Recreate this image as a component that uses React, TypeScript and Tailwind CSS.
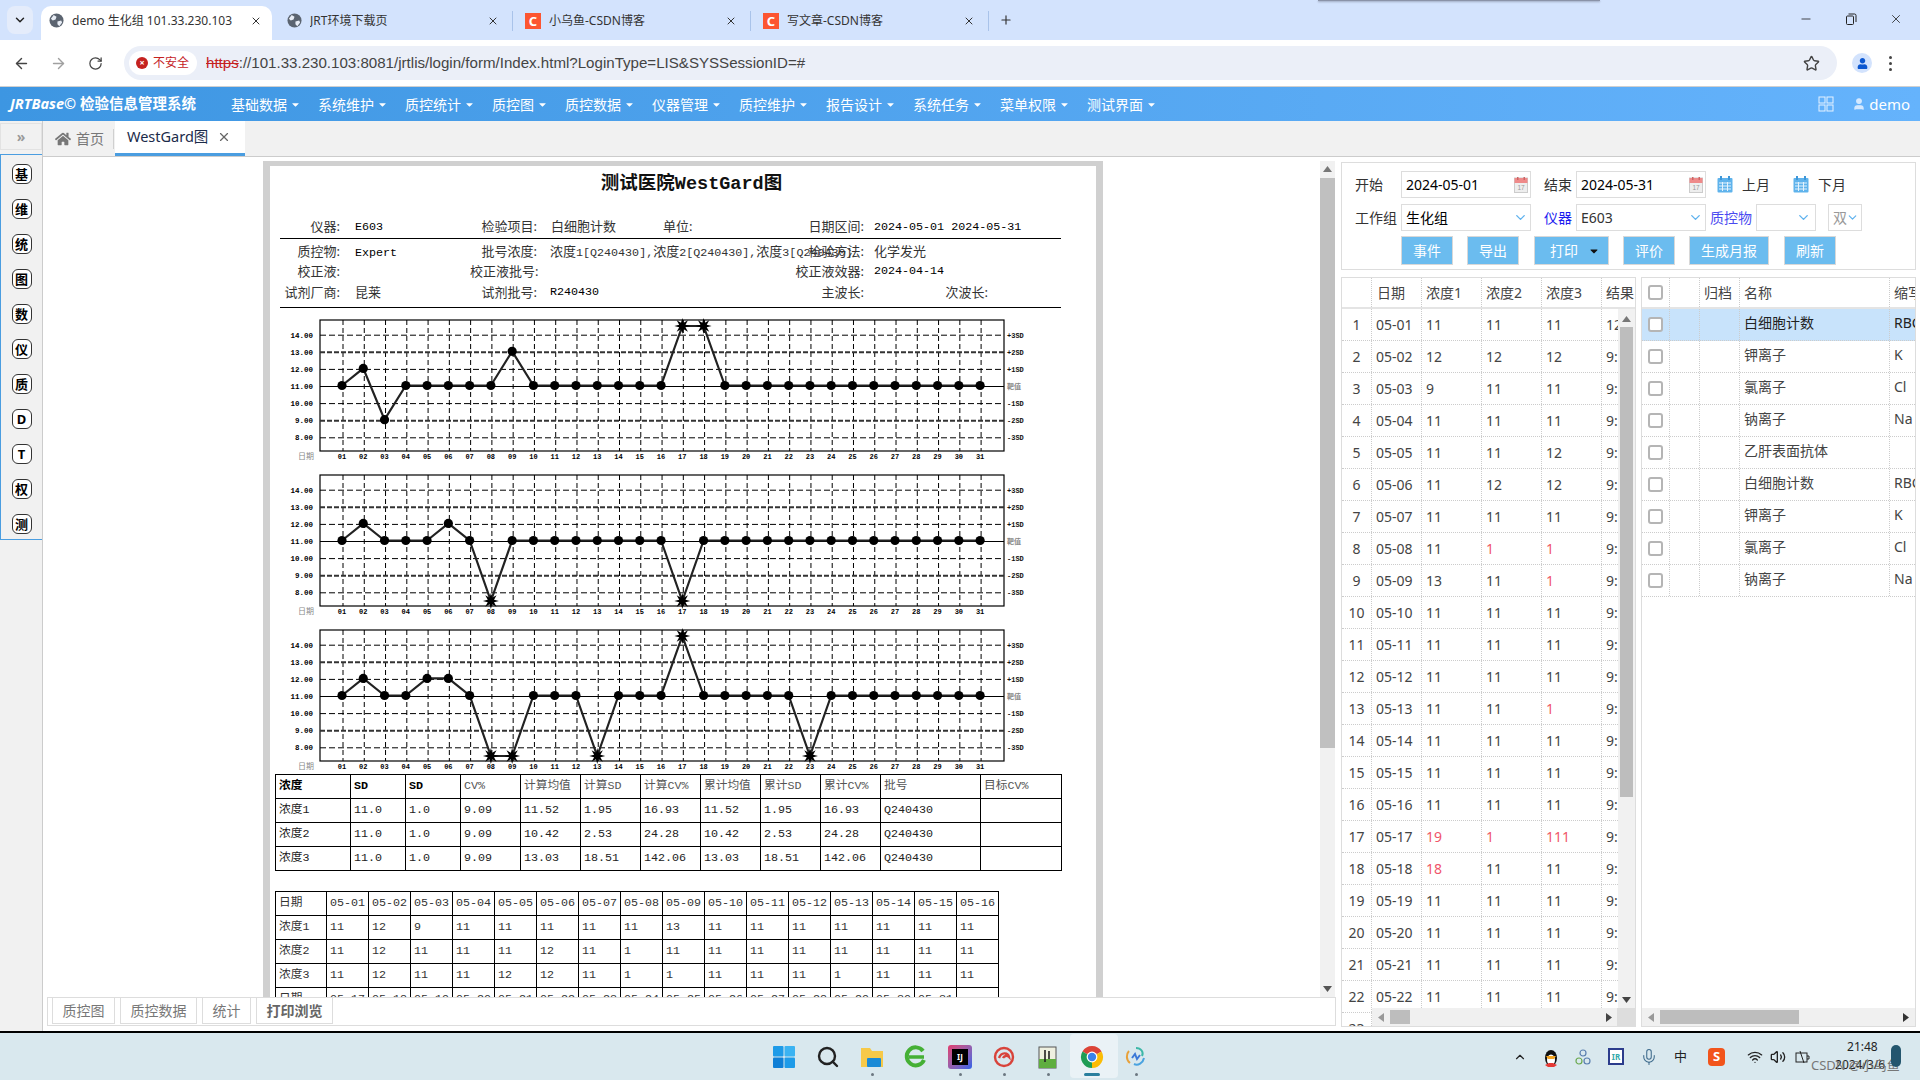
import { ArrowLeft, ArrowRight, ChevronDown, Minus, Plus, RotateCw, Search, Star, User, X, Mic, Volume2, Wifi, ChevronUp } from "lucide-react";
import { FaHome, FaUser, FaCaretDown } from "react-icons/fa";

const mono = "font-['Liberation_Mono','Noto_Sans_CJK_SC',monospace]";

const chromeTabs = [
  { title: "demo 生化组 101.33.230.103", icon: "globe", active: true },
  { title: "JRT环境下载页", icon: "globe", active: false },
  { title: "小乌鱼-CSDN博客", icon: "csdn", active: false },
  { title: "写文章-CSDN博客", icon: "csdn", active: false },
];

const menus = ["基础数据", "系统维护", "质控统计", "质控图", "质控数据", "仪器管理", "质控维护", "报告设计", "系统任务", "菜单权限", "测试界面"];
const sideIcons = ["基", "维", "统", "图", "数", "仪", "质", "D", "T", "权", "测"];
// 0 = not running, 1 = running dot, 2 = focused bar
const taskState = [0, 0, 1, 0, 1, 1, 1, 2, 1];

const base = Array.from({ length: 31 }, () => 11);
function series(over: Record<number, number>) {
  return base.map((v, i) => over[i + 1] ?? v);
}
const chart1 = series({ 2: 12, 3: 9, 9: 13, 17: 19, 18: 18 });
const chart2 = series({ 2: 12, 6: 12, 8: 1, 17: 1 });
const chart3 = series({ 2: 12, 5: 12, 6: 12, 8: 1, 9: 1, 13: 1, 17: 111, 23: 1 });

const yOf = (v: number) => 78.5 - (v - 11) * 17.1;
const leftLabels = [14, 13, 12, 11, 10, 9, 8];
const rightLabels = ["+3SD", "+2SD", "+1SD", "靶值", "-1SD", "-2SD", "-3SD"];

function StarMark({ x, y }: { x: number; y: number }) {
  const pts = Array.from({ length: 16 }, (_, i) => {
    const r = i % 2 === 0 ? 8 : 3.4;
    const a = (i * Math.PI) / 8 - Math.PI / 2;
    return `${x + r * Math.cos(a)},${y + r * Math.sin(a)}`;
  }).join(" ");
  return <polygon points={pts} fill="#000" />;
}

function Chart({ values }: { values: number[] }) {
  const xs = values.map((_, i) => 62 + i * 21.27);
  const ys = values.map((v) => (v > 14.5 ? 18 : v < 7.5 ? 138 : yOf(v) - 1));
  return (
    <svg width="781" height="155" className="block shrink-0">
      <rect x="40" y="12" width="684" height="131" fill="none" stroke="#000" strokeWidth="1.2" />
      {xs.map((x) => (
        <line key={x} x1={x + 1} x2={x + 1} y1="12" y2="143" stroke="#000" strokeDasharray="5 3" />
      ))}
      {[14, 12, 10, 8].map((v) => (
        <line key={v} x1="40" x2="724" y1={yOf(v)} y2={yOf(v)} stroke="#000" strokeDasharray="6 3" />
      ))}
      {[13, 9].map((v) => (
        <line key={v} x1="40" x2="724" y1={yOf(v)} y2={yOf(v)} stroke="#333" strokeWidth="2" strokeDasharray="5 2" />
      ))}
      <line x1="40" x2="724" y1={yOf(11)} y2={yOf(11)} stroke="#000" strokeWidth="1.2" />
      <polyline points={xs.map((x, i) => `${x},${ys[i]}`).join(" ")} fill="none" stroke="#222" strokeWidth="2.2" />
      {xs.map((x, i) =>
        values[i] > 14.5 || values[i] < 7.5 ? (
          <StarMark key={x} x={x} y={ys[i]} />
        ) : (
          <circle key={x} cx={x} cy={ys[i]} r="4.6" fill="#000" />
        ),
      )}
      {leftLabels.map((v) => (
        <text key={v} x="33" y={yOf(v) + 2.5} textAnchor="end" fontSize="7.5" fontWeight="700" fontFamily="Liberation Mono">
          {v}.00
        </text>
      ))}
      {rightLabels.map((l, i) => (
        <text key={l} x="727" y={yOf(14 - i) + 2.5} fontSize="7" fontWeight="700" fill={i === 3 ? "#888" : "#111"} fontFamily="Liberation Mono, Noto Sans CJK SC">
          {l}
        </text>
      ))}
      <text x="18" y="151" fontSize="8" fill="#888" fontFamily="Noto Sans CJK SC">日期</text>
      {xs.map((x, i) => (
        <text key={x} x={x} y="151" textAnchor="middle" fontSize="7" fontWeight="700" fontFamily="Liberation Mono">
          {String(i + 1).padStart(2, "0")}
        </text>
      ))}
    </svg>
  );
}

const statHead = ["浓度", "SD", "SD", "CV%", "计算均值", "计算SD", "计算CV%", "累计均值", "累计SD", "累计CV%", "批号", "目标CV%"];
const statRows = [
  ["浓度1", "11.0", "1.0", "9.09", "11.52", "1.95", "16.93", "11.52", "1.95", "16.93", "Q240430", ""],
  ["浓度2", "11.0", "1.0", "9.09", "10.42", "2.53", "24.28", "10.42", "2.53", "24.28", "Q240430", ""],
  ["浓度3", "11.0", "1.0", "9.09", "13.03", "18.51", "142.06", "13.03", "18.51", "142.06", "Q240430", ""],
];
const dayHead = ["日期", ...Array.from({ length: 16 }, (_, i) => `05-${String(i + 1).padStart(2, "0")}`)];
const dayRows = [
  ["浓度1", "11", "12", "9", "11", "11", "11", "11", "11", "13", "11", "11", "11", "11", "11", "11", "11"],
  ["浓度2", "11", "12", "11", "11", "11", "12", "11", "1", "11", "11", "11", "11", "11", "11", "11", "11"],
  ["浓度3", "11", "12", "11", "11", "12", "12", "11", "1", "1", "11", "11", "11", "1", "11", "11", "11"],
  ["日期", "05-17", "05-18", "05-19", "05-20", "05-21", "05-22", "05-23", "05-24", "05-25", "05-26", "05-27", "05-28", "05-29", "05-30", "05-31", ""],
];

type Cell = string | { v: string; red: true };
const r = (v: string): Cell => ({ v, red: true });
const qcRows: Cell[][] = [
  ["11", "11", "11", "12"],
  ["12", "12", "12", "9"],
  ["9", "11", "11", "9"],
  ["11", "11", "11", "9"],
  ["11", "11", "12", "9"],
  ["11", "12", "12", "9"],
  ["11", "11", "11", "9"],
  ["11", r("1"), r("1"), "9"],
  ["13", "11", r("1"), "9"],
  ["11", "11", "11", "9"],
  ["11", "11", "11", "9"],
  ["11", "11", "11", "9"],
  ["11", "11", r("1"), "9"],
  ["11", "11", "11", "9"],
  ["11", "11", "11", "9"],
  ["11", "11", "11", "9"],
  [r("19"), r("1"), r("111"), "9"],
  [r("18"), "11", "11", "9"],
  ["11", "11", "11", "9"],
  ["11", "11", "11", "9"],
  ["11", "11", "11", "9"],
  ["11", "11", "11", "9"],
  ["11", "11", "11", "9"],
];
const items = [
  ["白细胞计数", "RBC"],
  ["钾离子", "K"],
  ["氯离子", "Cl"],
  ["钠离子", "Na"],
  ["乙肝表面抗体", ""],
  ["白细胞计数", "RBC"],
  ["钾离子", "K"],
  ["氯离子", "Cl"],
  ["钠离子", "Na"],
];

function GlobeIcon() {
  return (
    <svg width="15" height="15" viewBox="0 0 16 16" className="shrink-0">
      <circle cx="8" cy="8" r="7.5" fill="#5b6470" />
      <path d="M5 2l3 2-1 3-3 1-2-2zM9 9l4-1 1 2-3 4-2-2z" fill="#e8edf5" />
    </svg>
  );
}

function ChromeLogo({ size = 24 }: { size?: number }) {
  return (
    <svg width={size} height={size} viewBox="0 0 24 24">
      <path d="M12 12 L2.47 6.5 A11 11 0 0 1 21.53 6.5 Z" fill="#dc4437" />
      <path d="M12 12 L2.47 6.5 A11 11 0 0 0 12 23 Z" fill="#1f9d55" />
      <path d="M12 12 L12 23 A11 11 0 0 0 21.53 6.5 Z" fill="#fbbc05" />
      <circle cx="12" cy="12" r="5.4" fill="#fff" />
      <circle cx="12" cy="12" r="4.2" fill="#3b82e8" />
    </svg>
  );
}

function MiniCalendar() {
  return (
    <svg width="14" height="16" viewBox="0 0 14 16">
      <rect x="0.5" y="1" width="13" height="14.5" fill="#eee" stroke="#ccc" />
      <rect x="0.5" y="1" width="13" height="5" fill="#ef8a8a" />
      <rect x="3" y="0" width="1.5" height="3" fill="#c66" />
      <rect x="9.5" y="0" width="1.5" height="3" fill="#c66" />
      <text x="7" y="13" textAnchor="middle" fontSize="6.5" fill="#999" fontFamily="Liberation Sans">17</text>
    </svg>
  );
}

function BlueCalendar() {
  return (
    <svg width="16" height="17" viewBox="0 0 16 17" className="shrink-0">
      <rect x="0.5" y="2" width="15" height="14.5" rx="1" fill="#5fb3ec" />
      <rect x="3" y="0" width="2" height="4" fill="#3e97d8" />
      <rect x="11" y="0" width="2" height="4" fill="#3e97d8" />
      <path d="M2 7h12M2 10h12M2 13h12M5.5 6v9M10.5 6v9" stroke="#e4f3fd" />
    </svg>
  );
}

function Caret({ dir, className }: { dir: "up" | "down" | "left" | "right"; className?: string }) {
  const pts = { up: "0,6 4.5,0 9,6", down: "0,0 9,0 4.5,6", left: "6,0 6,9 0,4.5", right: "0,0 0,9 6,4.5" }[dir];
  const vert = dir === "up" || dir === "down";
  return (
    <svg width={vert ? 9 : 6} height={vert ? 6 : 9} className={className}>
      <polygon points={pts} fill="currentColor" />
    </svg>
  );
}

function Checkbox() {
  return <span className="block w-[15px] h-[15px] rounded-[3px] border-2 border-[#b5b5b5] bg-white" />;
}

function Tray() {
  return (
    <div className="flex items-center h-full text-[#222]">
      <ChevronUp size={14} className="ml-[1513px]" />
      <svg width="16" height="20" viewBox="0 0 16 20" className="ml-[16px]">
        <ellipse cx="8" cy="11" rx="6" ry="8" fill="#111" />
        <ellipse cx="8" cy="13" rx="4" ry="5.5" fill="#fff" />
        <path d="M3 9h10l-2 3H5z" fill="#f5a623" />
        <path d="M2 18l4-2h4l4 2-3 2H5z" fill="#e53935" />
      </svg>
      <svg width="16" height="18" viewBox="0 0 16 18" className="ml-[16px]" fill="none" stroke="#5a7fb0" strokeWidth="1.2">
        <circle cx="8" cy="5" r="3" />
        <circle cx="4" cy="13" r="3" stroke="#6aa84f" />
        <circle cx="12" cy="13" r="3" />
      </svg>
      <div className="ml-[17px] w-[16px] h-[17px] border-2 border-[#2c3c8c] bg-white text-[8px] font-bold text-[#3aa] flex items-center justify-center">IR</div>
      <Mic size={18} strokeWidth={1.4} className="ml-[16px] text-[#3d6a8c]" />
      <div className="ml-[16px] text-[13px] leading-none">中</div>
      <div className="ml-[21px] w-[17px] h-[18px] rounded-[4px] bg-[#f2541b] text-white text-[13px] font-bold flex items-center justify-center leading-none">S</div>
      <Wifi size={16} className="ml-[22px]" />
      <Volume2 size={16} className="ml-[7px]" />
      <svg width="15" height="14" viewBox="0 0 15 14" className="ml-[9px]" fill="none" stroke="#222">
        <rect x="1" y="3" width="11" height="9" />
        <path d="M12 6h2v3h-2M5 1L9 13" />
      </svg>
      <div className="relative ml-[1px] w-[104px] h-full">
        <div className="absolute left-[36px] top-[6px] text-[12px] text-[#222] leading-[16px]">21:48</div>
        <div className="absolute left-[24px] top-[24px] text-[12px] text-[#222] leading-[16px]">2024/3/6</div>
        <div className="absolute left-[0px] top-[24px] text-[13px] text-[#777] leading-[16px] whitespace-nowrap">CSDN @小乌鱼</div>
        <div className="absolute left-[80px] top-[12px] w-[10px] h-[22px] rounded-full bg-[#24566e]" />
      </div>
    </div>
  );
}

export default function App() {
  return (
    <div className="w-[1920px] h-[1080px] overflow-hidden flex flex-col bg-white font-['Noto_Sans','Noto_Sans_CJK_SC',sans-serif] text-[#444]">
      {/* browser tab strip */}
      <div className="relative h-[40px] bg-[#d3e3fd] flex items-end shrink-0">
        <div className="absolute left-[1318px] top-0 w-[282px] h-[1px] bg-[#8a93a8] shadow-[0_1px_2px_#8a93a8]" />
        <div className="ml-[7px] mb-[6px] w-[26px] h-[28px] rounded-[8px] bg-[#e4ecfb] flex items-center justify-center text-[#222]">
          <ChevronDown size={14} strokeWidth={2.5} />
        </div>
        <div className="ml-[8px] flex items-end">
          {chromeTabs.map((t) => (
            <div
              key={t.title}
              className={
                t.active
                  ? "flex items-center h-[34px] w-[231px] mr-[7px] pl-[8px] pr-[10px] pb-[5px] bg-white rounded-t-[10px]"
                  : "flex items-center h-[34px] w-[238px] pl-[8px] pb-[5px]"
              }
            >
              {t.icon === "globe" ? (
                <GlobeIcon />
              ) : (
                <span className="shrink-0 w-[16px] h-[16px] bg-[#fc5531] text-white text-[13px] leading-[16px] text-center font-bold">C</span>
              )}
              <span className="ml-[8px] flex-1 text-[12px] text-[#333] whitespace-nowrap overflow-hidden">{t.title}</span>
              <X size={12} className="shrink-0 text-[#333]" />
              {!t.active && <span className="ml-[13px] mr-[4px] w-[1px] h-[20px] bg-[#a9c3ea]" />}
            </div>
          ))}
        </div>
        <Plus size={14} className="ml-[6px] mb-[13px] text-[#333]" />
        <div className="ml-auto flex items-center gap-[32px] pr-[17px] mb-[14px] text-[#222]">
          <Minus size={14} strokeWidth={1.4} />
          <svg width="12" height="12" viewBox="0 0 12 12" fill="none" stroke="#222">
            <rect x="1.5" y="3" width="7" height="8.5" rx="1" />
            <path d="M3.5 1h6a1.5 1.5 0 0 1 1.5 1.5V9" />
          </svg>
          <X size={14} strokeWidth={1.4} />
        </div>
      </div>

      {/* browser address bar */}
      <div className="h-[47px] shrink-0 bg-white border-b border-[#d0d0d0] flex items-center rounded-tr-[8px] text-[#444]">
        <ArrowLeft size={17} className="ml-[13px]" />
        <ArrowRight size={17} className="ml-[20px] text-[#a0a0a0]" />
        <RotateCw size={15} className="ml-[21px]" />
        <div className="ml-[21px] w-[1713px] h-[34px] rounded-full bg-[#ebeff8] flex items-center">
          <div className="ml-[5px] w-[68px] h-[24px] rounded-full bg-white flex items-center pl-[7px]">
            <span className="w-[12px] h-[12px] rounded-full bg-[#c5221f] text-white text-[9px] leading-[12px] text-center font-bold">×</span>
            <span className="ml-[5px] text-[12px] text-[#c5221f]">不安全</span>
          </div>
          <div className="ml-[9px] text-[15.1px] text-[#444] whitespace-nowrap font-['Liberation_Sans',sans-serif]">
            <span className="text-[#c5221f] line-through">https</span>://101.33.230.103:8081/jrtlis/login/form/Index.html?LoginType=LIS&amp;SYSSessionID=#
          </div>
          <Star size={17} className="ml-auto mr-[17px] text-[#444]" />
        </div>
        <div className="ml-[15px] w-[20px] h-[20px] rounded-full bg-[#d3e3fd] flex items-center justify-center">
          <FaUser size={11} className="text-[#0b57d0]" />
        </div>
        <div className="ml-[17px] flex flex-col gap-[3px]">
          <span className="w-[3px] h-[3px] rounded-full bg-[#444]" />
          <span className="w-[3px] h-[3px] rounded-full bg-[#444]" />
          <span className="w-[3px] h-[3px] rounded-full bg-[#444]" />
        </div>
      </div>

      {/* app header */}
      <div className="h-[34px] shrink-0 bg-gradient-to-r from-[#3d96e2] to-[#65b3fc] flex items-center text-white">
        <div className="w-[231px] pl-[10px] text-[14.5px] font-bold whitespace-nowrap">
          <span className="italic">JRTBase©</span> 检验信息管理系统
        </div>
        <div className="flex items-center gap-[17px] text-[14px]">
          {menus.map((m) => (
            <div key={m} className="flex items-center">
              <span>{m}</span>
              <FaCaretDown size={11} className="ml-[3px]" />
            </div>
          ))}
        </div>
        <svg width="16" height="16" viewBox="0 0 16 16" className="ml-auto" fill="none" stroke="#e6f2ff">
          <rect x="1" y="1" width="6" height="6" />
          <rect x="9" y="1" width="6" height="6" />
          <rect x="1" y="9" width="6" height="6" />
          <rect x="9" y="9" width="6" height="6" />
        </svg>
        <User size={14} className="ml-[18px] text-[#d5e9ff] fill-[#d5e9ff]" />
        <span className="ml-[3px] mr-[10px] text-[15px]">demo</span>
      </div>

      <div className="flex-1 flex min-h-0">
        {/* left rail */}
        <div className="w-[43px] shrink-0 bg-[#f1f1f1] border-r border-[#ccc] flex flex-col">
          <div className="h-[33px] pt-[2px]">
            <div className="h-[27px] w-[42px] border border-[#e2e2e2] flex items-center justify-center text-[#999] text-[14px] font-bold">»</div>
          </div>
          <div className="h-[386px] border border-r-0 border-[#4a9de0] flex flex-col items-center pt-[9px] gap-[15px]">
            {sideIcons.map((s) => (
              <div key={s} className="w-[20px] h-[20px] rounded-[6px] border border-[#333] bg-white text-[13px] font-bold text-black flex items-center justify-center leading-none">
                {s}
              </div>
            ))}
          </div>
        </div>

        <div className="flex-1 flex flex-col min-w-0">
          {/* page tabs */}
          <div className="h-[36px] shrink-0 bg-[#f1f1f1] border-b border-[#ccc] flex items-stretch">
            <div className="flex items-center w-[72px] pl-[12px] text-[#777]">
              <FaHome size={16} />
              <span className="ml-[5px] text-[14px]">首页</span>
              <span className="ml-[9px] w-[1px] h-[20px] bg-[#d0d0d0]" />
            </div>
            <div className="w-[130px] bg-white border-b-[3px] border-[#4a9de0] flex items-center pl-[12px] text-[14.5px] text-[#1b2b4a]">
              <span>WestGard图</span>
              <X size={14} className="ml-[9px] text-[#666]" />
            </div>
          </div>

          <div className="flex-1 flex min-h-0">
            {/* preview column */}
            <div className="w-[1293px] shrink-0 flex flex-col">
              <div className="h-[840px] flex pt-[4px]">
                <div className="w-[1277px] overflow-hidden">
                  <div className="ml-[220px] w-[840px] border-x-[7px] border-t-[5px] border-[#d0d0d0] bg-white pl-[10px] text-[#333]">
                    <div className={`h-[34px] pl-[7px] pt-[4px] flex items-center justify-center text-[18.5px] font-bold text-[#111] ${mono}`}>测试医院WestGard图</div>
                    <div className="mt-[15px] h-[24px] border-b border-black w-[781px] grid grid-cols-[60px_130px_67px_253px_74px_197px] items-center text-[13px] whitespace-nowrap">
                      <div className="text-right">仪器:</div>
                      <div className={`pl-[15px] pt-[2px] text-[11.7px] text-black ${mono}`}>E603</div>
                      <div className="text-right">检验项目:</div>
                      <div className="pl-[14px] flex">
                        <span className="w-[112px]">白细胞计数</span>
                        <span>单位:</span>
                      </div>
                      <div className="text-right">日期区间:</div>
                      <div className={`pl-[10px] pt-[2px] text-[11.7px] text-black ${mono}`}>2024-05-01 2024-05-31</div>
                    </div>
                    <div className="mt-[2px] h-[20px] w-[781px] grid grid-cols-[60px_130px_67px_253px_74px_197px] items-center text-[13px] whitespace-nowrap">
                      <div className="text-right">质控物:</div>
                      <div className={`pl-[15px] pt-[4px] text-[11.7px] text-black ${mono}`}>Expert</div>
                      <div className="text-right">批号浓度:</div>
                      <div className="pl-[13px]">
                        浓度<span className={`text-[11.7px] ${mono}`}>1[Q240430],</span>浓度<span className={`text-[11.7px] ${mono}`}>2[Q240430],</span>浓度<span className={`text-[11.7px] ${mono}`}>3[Q240430]</span>
                      </div>
                      <div className="text-right">检验方法:</div>
                      <div className="pl-[10px]">化学发光</div>
                    </div>
                    <div className="h-[21px] w-[781px] grid grid-cols-[60px_130px_67px_253px_74px_197px] items-center text-[13px] whitespace-nowrap">
                      <div className="text-right">校正液:</div>
                      <div />
                      <div className="text-right">校正液批号:</div>
                      <div />
                      <div className="text-right">校正液效器:</div>
                      <div className={`pl-[10px] text-[11.7px] text-black ${mono}`}>2024-04-14</div>
                    </div>
                    <div className="h-[21px] w-[781px] grid grid-cols-[60px_130px_67px_253px_74px_197px] items-center text-[13px] whitespace-nowrap">
                      <div className="text-right">试剂厂商:</div>
                      <div className="pl-[15px]">昆莱</div>
                      <div className="text-right">试剂批号:</div>
                      <div className={`pl-[13px] pt-[1px] text-[11.7px] text-black ${mono}`}>R240430</div>
                      <div className="text-right">主波长:</div>
                      <div className="w-[124px] text-right">次波长:</div>
                    </div>
                    <div className="mt-[4px] border-b border-black w-[781px]" />

                    <Chart values={chart1} />
                    <Chart values={chart2} />
                    <Chart values={chart3} />

                    <table className="mt-[1px] -ml-[5px] w-[786px] table-fixed border-collapse border border-black text-[11.7px]">
                      <colgroup>
                        <col className="w-[75px]" />
                        <col className="w-[55px]" />
                        <col className="w-[55px]" />
                        <col className="w-[60px]" />
                        <col className="w-[60px]" />
                        <col className="w-[60px]" />
                        <col className="w-[60px]" />
                        <col className="w-[60px]" />
                        <col className="w-[60px]" />
                        <col className="w-[60px]" />
                        <col className="w-[100px]" />
                        <col className="w-[81px]" />
                      </colgroup>
                      <tbody>
                        <tr className="h-[24px]">
                          {statHead.map((h, i) => (
                            <td key={i} className={`border border-black pl-[3px] whitespace-nowrap overflow-hidden ${mono} ${i < 3 ? "font-bold text-black" : "text-[#555]"}`}>
                              {h}
                            </td>
                          ))}
                        </tr>
                        {statRows.map((row) => (
                          <tr key={row[0]} className="h-[24px]">
                            {row.map((c, i) => (
                              <td key={i} className={`border border-black pl-[3px] text-[#222] ${mono}`}>{c}</td>
                            ))}
                          </tr>
                        ))}
                      </tbody>
                    </table>

                    <table className="mt-[20px] -ml-[5px] w-[723px] table-fixed border-collapse border border-black text-[11.7px]">
                      <colgroup>
                        <col className="w-[51px]" />
                        {dayHead.slice(1).map((d) => (
                          <col key={d} className="w-[42px]" />
                        ))}
                      </colgroup>
                      <tbody>
                        <tr className="h-[24px]">
                          {dayHead.map((h) => (
                            <td key={h} className={`border border-black pl-[3px] whitespace-nowrap ${mono}`}>{h}</td>
                          ))}
                        </tr>
                        {dayRows.map((row, ri) => (
                          <tr key={ri} className="h-[24px]">
                            {row.map((c, i) => (
                              <td key={i} className={`border border-black pl-[3px] whitespace-nowrap ${mono}`}>{c}</td>
                            ))}
                          </tr>
                        ))}
                      </tbody>
                    </table>
                  </div>
                </div>
                {/* preview scrollbar */}
                <div className="w-[15px] h-[836px] bg-[#f1f1f1] flex flex-col items-center pt-[5px] text-[#777]">
                  <Caret dir="up" />
                  <div className="mt-[6px] w-full h-[570px] bg-[#c0c0c0]" />
                  <Caret dir="down" className="mt-auto mb-[5px] text-[#555]" />
                </div>
              </div>

              {/* bottom tabs */}
              <div className="ml-[4px] h-[29px] border border-[#ddd] flex items-start pl-[4px] gap-[5px] text-[14px] text-[#777]">
                <div className="w-[63px] h-[26px] border border-t-0 border-[#ddd] flex items-center justify-center">质控图</div>
                <div className="w-[77px] h-[26px] border border-t-0 border-[#ddd] flex items-center justify-center">质控数据</div>
                <div className="w-[49px] h-[26px] border border-t-0 border-[#ddd] flex items-center justify-center">统计</div>
                <div className="w-[77px] h-[26px] border border-t-0 border-[#ddd] flex items-center justify-center font-bold text-[#666] bg-white">打印浏览</div>
              </div>
            </div>

            {/* right side */}
            <div className="flex-1 pt-[5px] pl-[5px] pr-[4px] flex flex-col min-w-0">
              <div className="h-[108px] border border-[#ddd] shrink-0 pt-[8px] text-[14px] text-[#333]">
                <div className="flex items-center h-[27px] pl-[13px]">
                  <span className="w-[46px]">开始</span>
                  <div className="w-[130px] h-[27px] border border-[#ddd] flex items-center pl-[4px] text-black">
                    2024-05-01
                    <span className="ml-auto mr-[2px] flex"><MiniCalendar /></span>
                  </div>
                  <span className="ml-[13px] w-[32px]">结束</span>
                  <div className="w-[130px] h-[27px] border border-[#ddd] flex items-center pl-[4px] text-black">
                    2024-05-31
                    <span className="ml-auto mr-[2px] flex"><MiniCalendar /></span>
                  </div>
                  <span className="ml-[11px]"><BlueCalendar /></span>
                  <span className="ml-[9px] w-[51px]">上月</span>
                  <BlueCalendar />
                  <span className="ml-[9px]">下月</span>
                </div>
                <div className="mt-[6px] flex items-center h-[27px] pl-[13px]">
                  <span className="w-[46px]">工作组</span>
                  <div className="w-[130px] h-[27px] border border-[#ddd] flex items-center pl-[4px] text-black">
                    生化组
                    <ChevronDown size={15} className="ml-auto mr-[2px] text-[#5fb2ee]" strokeWidth={2.2} />
                  </div>
                  <span className="ml-[13px] w-[32px] text-[#1c1cf0]">仪器</span>
                  <div className="w-[130px] h-[27px] border border-[#ddd] flex items-center pl-[4px] text-[#333]">
                    E603
                    <ChevronDown size={15} className="ml-auto mr-[2px] text-[#5fb2ee]" strokeWidth={2.2} />
                  </div>
                  <span className="ml-[4px] w-[46px] text-[#4a4af0]">质控物</span>
                  <div className="w-[60px] h-[27px] border border-[#ddd] flex items-center">
                    <ChevronDown size={15} className="ml-auto mr-[4px] text-[#5fb2ee]" strokeWidth={2.2} />
                  </div>
                  <div className="ml-[12px] w-[34px] h-[27px] border border-[#ddd] flex items-center pl-[4px] text-[#999]">
                    双
                    <ChevronDown size={13} className="text-[#5fb2ee] -ml-[1px]" strokeWidth={2.2} />
                  </div>
                </div>
                <div className="mt-[5px] ml-[59px] flex items-center text-white text-[14px]">
                  <button className="w-[52px] h-[29px] bg-[#6bbcef] border border-[#d8d8d8]">事件</button>
                  <button className="ml-[14px] w-[52px] h-[29px] bg-[#6bbcef] border border-[#d8d8d8]">导出</button>
                  <button className="ml-[15px] w-[75px] h-[29px] bg-[#6bbcef] border border-[#d8d8d8] flex items-center pl-[15px]">
                    打印
                    <FaCaretDown size={12} className="ml-[10px] text-[#111]" />
                  </button>
                  <button className="ml-[14px] w-[52px] h-[29px] bg-[#6bbcef] border border-[#d8d8d8]">评价</button>
                  <button className="ml-[14px] w-[80px] h-[29px] bg-[#6bbcef] border border-[#d8d8d8]">生成月报</button>
                  <button className="ml-[15px] w-[52px] h-[29px] bg-[#6bbcef] border border-[#d8d8d8]">刷新</button>
                </div>
              </div>

              <div className="mt-[7px] h-[750px] flex gap-[5px] text-[14px] text-[#444]">
                {/* results grid */}
                <div className="relative w-[295px] h-full border border-[#ddd] overflow-hidden flex flex-col">
                  <div className="h-[31px] shrink-0 border-b-2 border-[#e4e4e4] flex items-stretch whitespace-nowrap">
                    <div className="w-[30px] border-r border-dotted border-[#ccc]" />
                    <div className="w-[50px] pl-[5px] border-r border-dotted border-[#ccc] flex items-center">日期</div>
                    <div className="w-[60px] pl-[4px] border-r border-dotted border-[#ccc] flex items-center">浓度1</div>
                    <div className="w-[60px] pl-[4px] border-r border-dotted border-[#ccc] flex items-center">浓度2</div>
                    <div className="w-[60px] pl-[4px] border-r border-dotted border-[#ccc] flex items-center">浓度3</div>
                    <div className="flex-1 pl-[4px] overflow-hidden flex items-center">结果</div>
                  </div>
                  <div className="flex flex-1 min-h-0">
                    <div className="w-[276px] overflow-hidden">
                      {qcRows.map((row, i) => (
                        <div key={i} className="h-[32px] border-b border-dotted border-[#ccc] flex items-stretch whitespace-nowrap">
                          <div className="w-[30px] border-r border-dotted border-[#ccc] flex items-center justify-center">{i + 1}</div>
                          <div className="w-[50px] pl-[4px] border-r border-dotted border-[#ccc] flex items-center">
                            05-{String(i + 1).padStart(2, "0")}
                          </div>
                          {row.map((c, j) => (
                            <div
                              key={j}
                              className={`pl-[4px] flex items-center ${j < 3 ? "w-[60px] border-r border-dotted border-[#ccc]" : "flex-1 overflow-hidden"} ${typeof c === "object" ? "text-[#f0556a]" : ""}`}
                            >
                              {typeof c === "object" ? c.v : c}
                              {j === 3 && i > 0 ? ":" : ""}
                            </div>
                          ))}
                        </div>
                      ))}
                    </div>
                    <div className="w-[17px] bg-[#f1f1f1] flex flex-col items-center pt-[7px] text-[#777]">
                      <Caret dir="up" />
                      <div className="mt-[5px] w-[13px] h-[470px] bg-[#bdbdbd]" />
                      <Caret dir="down" className="mt-[200px] text-[#444]" />
                    </div>
                  </div>
                  <div className="absolute left-[30px] right-0 bottom-0 h-[18px] bg-[#f0f0f0] flex items-center">
                    <Caret dir="left" className="ml-[6px] text-[#999]" />
                    <div className="ml-[6px] w-[20px] h-[14px] bg-[#bdbdbd]" />
                    <Caret dir="right" className="ml-auto mr-[5px] text-[#444]" />
                    <div className="w-[18px] h-[18px] bg-[#ddd]" />
                  </div>
                </div>

                {/* item grid */}
                <div className="relative flex-1 h-full border border-[#ddd] overflow-hidden flex flex-col">
                  <div className="h-[31px] shrink-0 border-b-2 border-[#e4e4e4] flex items-stretch whitespace-nowrap">
                    <div className="w-[28px] border-r border-dotted border-[#ccc] flex items-center justify-center"><Checkbox /></div>
                    <div className="w-[30px] border-r border-dotted border-[#ccc]" />
                    <div className="w-[40px] pl-[4px] border-r border-dotted border-[#ccc] flex items-center">归档</div>
                    <div className="w-[150px] pl-[4px] border-r border-dotted border-[#ccc] flex items-center">名称</div>
                    <div className="flex-1 pl-[4px] overflow-hidden flex items-center">缩写</div>
                  </div>
                  {items.map((it, i) => (
                    <div key={i} className={`h-[32px] shrink-0 border-b border-dotted border-[#ccc] flex items-stretch whitespace-nowrap ${i === 0 ? "bg-[#c8e3fb] text-[#222]" : ""}`}>
                      <div className="w-[28px] border-r border-dotted border-[#ccc] flex items-center justify-center"><Checkbox /></div>
                      <div className="w-[30px] border-r border-dotted border-[#ccc]" />
                      <div className="w-[40px] border-r border-dotted border-[#ccc]" />
                      <div className="w-[150px] pl-[4px] pb-[5px] border-r border-dotted border-[#ccc] flex items-center">{it[0]}</div>
                      <div className="flex-1 pl-[4px] pb-[5px] overflow-hidden flex items-center">{it[1]}</div>
                    </div>
                  ))}
                  <div className="absolute left-0 right-0 bottom-0 h-[18px] bg-[#f0f0f0] flex items-center">
                    <Caret dir="left" className="ml-[6px] text-[#999]" />
                    <div className="ml-[6px] w-[139px] h-[14px] bg-[#bdbdbd]" />
                    <Caret dir="right" className="ml-auto mr-[6px] text-[#333]" />
                  </div>
                </div>
              </div>
            </div>
          </div>
        </div>
      </div>

      {/* windows taskbar */}
      <div className="relative h-[49px] shrink-0 border-t-2 border-black bg-[#d9e8ee]">
        <div className="absolute left-[1070px] top-[1px] w-[48px] h-[44px] rounded-[4px] bg-[#eaf2f6]" />
        <div className="absolute left-[772px] top-0 h-full flex items-center gap-[20px]">
          <svg width="24" height="24" viewBox="0 0 24 24">
            <rect x="1" y="1" width="10.5" height="10.5" rx="1" fill="#1e9be8" />
            <rect x="12.5" y="1" width="10.5" height="10.5" rx="1" fill="#3bb3f2" />
            <rect x="1" y="12.5" width="10.5" height="10.5" rx="1" fill="#0f7fd6" />
            <rect x="12.5" y="12.5" width="10.5" height="10.5" rx="1" fill="#1e9be8" />
          </svg>
          <Search size={24} strokeWidth={2.4} className="text-[#222]" />
          <svg width="24" height="24" viewBox="0 0 24 24">
            <path d="M1 3h9l2 3h11v16H1z" fill="#f7c948" />
            <rect x="7" y="13" width="14" height="9" rx="1" fill="#1a8ad6" />
          </svg>
          <svg width="24" height="24" viewBox="0 0 24 24" fill="none">
            <path d="M20 15a9 9 0 1 1-1-9" stroke="#45b035" strokeWidth="4" />
            <path d="M5 12h15" stroke="#45b035" strokeWidth="3.5" />
          </svg>
          <div className="w-[24px] h-[24px] rounded-[3px] bg-gradient-to-br from-[#e3366c] to-[#2a60e8] p-[4px]">
            <div className="w-full h-full bg-black text-white text-[8px] font-bold leading-[16px] text-center">IJ</div>
          </div>
          <svg width="24" height="24" viewBox="0 0 24 24" fill="none" stroke="#d8433a" strokeWidth="2.4">
            <circle cx="12" cy="12" r="9" />
            <path d="M7 13c2-6 9-6 10-1-2-2-5-1-6 1" />
          </svg>
          <svg width="24" height="24" viewBox="0 0 24 24">
            <rect x="3" y="2" width="17" height="21" fill="#eef0e0" stroke="#555" />
            <rect x="3" y="14" width="17" height="9" fill="#5fae3f" />
            <path d="M9 5v12M13 6v8" stroke="#222" strokeWidth="1.6" />
          </svg>
          <ChromeLogo size={24} />
          <svg width="24" height="24" viewBox="0 0 24 24" fill="none" strokeWidth="2">
            <path d="M12 3c5 0 8 4 6 8" stroke="#3db8a8" />
            <path d="M20 13c-1 5-6 8-10 6" stroke="#4aa3e0" />
            <path d="M6 18c-4-3-4-9-1-12" stroke="#e8a13a" />
            <path d="M8 13l3-4 2 5 3-4" stroke="#3c78d8" />
          </svg>
        </div>
        {/* running indicators under the pinned apps */}
        <div className="absolute left-[772px] top-[40px] flex gap-[20px]">
          {taskState.map((s, i) => (
            <div key={i} className="w-[24px] h-[3px] flex justify-center">
              {s === 1 && <span className="w-[3px] h-[3px] rounded-full bg-[#6b7780]" />}
              {s === 2 && <span className="w-[16px] h-[3px] rounded-full bg-[#2a7f9e]" />}
            </div>
          ))}
        </div>
        <Tray />
      </div>
    </div>
  );
}
